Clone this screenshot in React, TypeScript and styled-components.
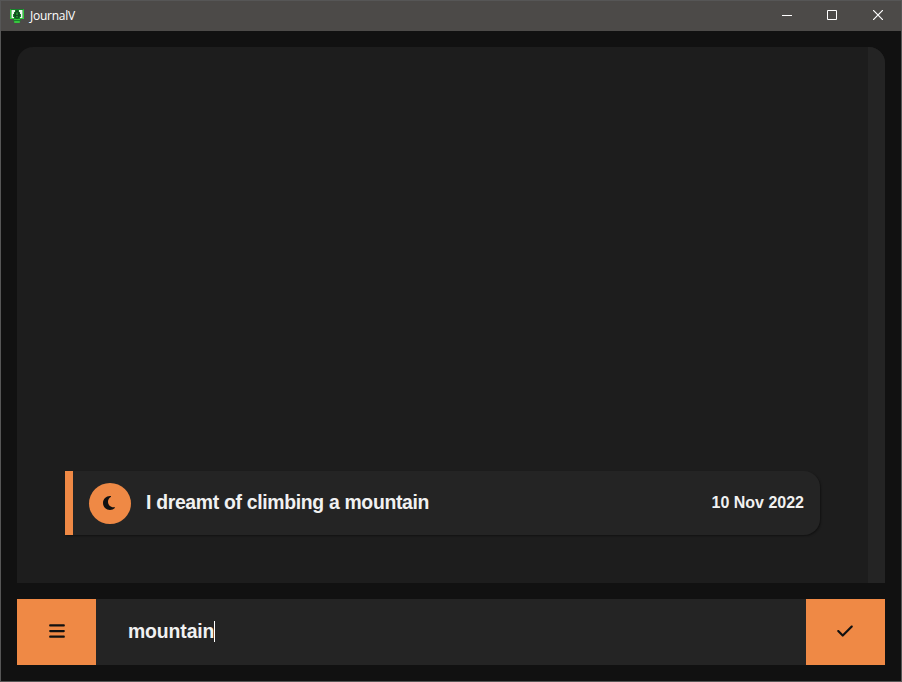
import React from "react";
import styled, { createGlobalStyle } from "styled-components";
import { FaBars, FaCheck, FaMoon } from "react-icons/fa6";

const accent = "#ef8945";

const GlobalStyle = createGlobalStyle`
  *, *::before, *::after { box-sizing: border-box; }
  html, body { margin: 0; padding: 0; background: #111111; overflow: hidden; }
  body { font-family: "Liberation Sans", Arial, sans-serif; color: #f1f1f1; }
`;

const AppWindow = styled.div`
  display: flex;
  flex-direction: column;
  width: 902px;
  height: 682px;
  border: 1px solid #565656;
  background: #111111;
`;

const TitleBar = styled.header`
  display: flex;
  align-items: center;
  flex: 0 0 30px;
  padding-left: 8px;
  background: #4c4a48;
`;

const AppTitle = styled.span`
  flex: 1;
  margin-left: 5px;
  font: 12px/16px "Open Sans", sans-serif;
  letter-spacing: -0.25px;
  color: #ffffff;
`;

const WindowButton = styled.button`
  display: flex;
  align-items: center;
  justify-content: center;
  width: 46px;
  height: 30px;
  padding: 0 0 2px;
  border: 0;
  background: transparent;
  color: #ffffff;

  &:nth-of-type(2) {
    width: 45px;
    padding-right: 1px;
  }
`;

const Content = styled.main`
  display: flex;
  flex: 1;
  flex-direction: column;
  gap: 16px;
  padding: 16px;
`;

const JournalPanel = styled.section`
  display: flex;
  flex: 1;
  overflow: hidden;
  border-radius: 16px 16px 0 0;
  background: #1d1d1d;
`;

const EntryList = styled.div`
  display: flex;
  flex: 1;
  flex-direction: column;
  justify-content: flex-end;
  padding: 48px;
`;

const ScrollTrack = styled.div`
  width: 17px;
  background: #242424;
`;

const Entry = styled.article`
  display: flex;
  align-items: center;
  height: 64px;
  padding: 0 16px;
  border-left: 8px solid ${accent};
  border-radius: 0 16px 16px 0;
  background: #242424;
  box-shadow: 1px 1px 2px rgba(0, 0, 0, 0.4);
`;

const EntryBadge = styled.div`
  display: flex;
  align-items: center;
  justify-content: center;
  width: 42px;
  height: 41px;
  padding-right: 2px;
  border-radius: 50%;
  background: ${accent};
  color: #111111;
  font-size: 16px;
`;

const EntryText = styled.span`
  flex: 1;
  margin-left: 15px;
  padding-bottom: 2px;
  font-size: 19.4px;
  font-weight: 700;
  line-height: 22px;
  letter-spacing: -0.32px;
`;

const EntryDate = styled.time`
  font-size: 16px;
  font-weight: 700;
  line-height: 18px;
`;

const CommandBar = styled.footer`
  display: flex;
  flex: 0 0 66px;
  background: #242424;
`;

const ActionButton = styled.button`
  display: flex;
  align-items: center;
  justify-content: center;
  width: 79px;
  padding: 0 0 2px 1px;
  border: 0;
  background: ${accent};
  color: #111111;
  font-size: 18px;

  &:last-child {
    padding: 0 1px 2px 0;
  }
`;

const SearchField = styled.div`
  display: flex;
  flex: 1;
  align-items: center;
  padding: 0 0 1px 32px;
  font-size: 19.4px;
  font-weight: 700;
  line-height: 22px;
  letter-spacing: -0.12px;
`;

const SearchText = styled.span`
  padding-bottom: 2px;
`;

const Caret = styled.span`
  width: 1px;
  height: 21px;
  background: #ffffff;
`;

function JournalLogo() {
  return (
    <svg width="16" height="16" viewBox="0 0 16 16">
      <path d="M1 1h14v9.5h-3.5v3h-7v-3H1z" fill="#16812a" />
      <path d="M2.5 2H6v2H5v2H4v3h1v1H2.5zM10 2h3.5v8H11V9h1V6h-1V4h-1z" fill="#edf9ee" />
      <path d="M8 1.5 5 6v2l2 2.5h2L11 8V6z" fill="#124a20" />
      <path d="M7.5 4.5h1V7h-1zM7.5 8h1v1.5h-1z" fill="#35c944" />
      <path d="M1 10.5h4M11 10.5h4M5 11.5h6M5.5 13.5h5v1h-5zM1.5 1.5v9M14.5 1.5v9" fill="none" stroke="#35d43d" strokeWidth=".9" />
    </svg>
  );
}

export default function App() {
  return (
    <>
      <GlobalStyle />
      <AppWindow>
        <TitleBar>
          <JournalLogo />
          <AppTitle>JournalV</AppTitle>
          <WindowButton aria-label="Minimize">
            <svg width="10" height="10"><path d="M0 5.5h10" stroke="currentColor" /></svg>
          </WindowButton>
          <WindowButton aria-label="Maximize">
            <svg width="10" height="10"><path d="M.5.5h9v9h-9z" fill="none" stroke="currentColor" /></svg>
          </WindowButton>
          <WindowButton aria-label="Close">
            <svg width="10" height="10"><path d="M0 0l10 10M10 0L0 10" stroke="currentColor" strokeWidth="1.2" /></svg>
          </WindowButton>
        </TitleBar>
        <Content>
          <JournalPanel>
            <EntryList>
              <Entry>
                <EntryBadge><FaMoon /></EntryBadge>
                <EntryText>I dreamt of climbing a mountain</EntryText>
                <EntryDate>10 Nov 2022</EntryDate>
              </Entry>
            </EntryList>
            <ScrollTrack />
          </JournalPanel>
          <CommandBar>
            <ActionButton aria-label="Menu"><FaBars /></ActionButton>
            <SearchField>
              <SearchText>mountain</SearchText>
              <Caret />
            </SearchField>
            <ActionButton aria-label="Confirm"><FaCheck /></ActionButton>
          </CommandBar>
        </Content>
      </AppWindow>
    </>
  );
}
